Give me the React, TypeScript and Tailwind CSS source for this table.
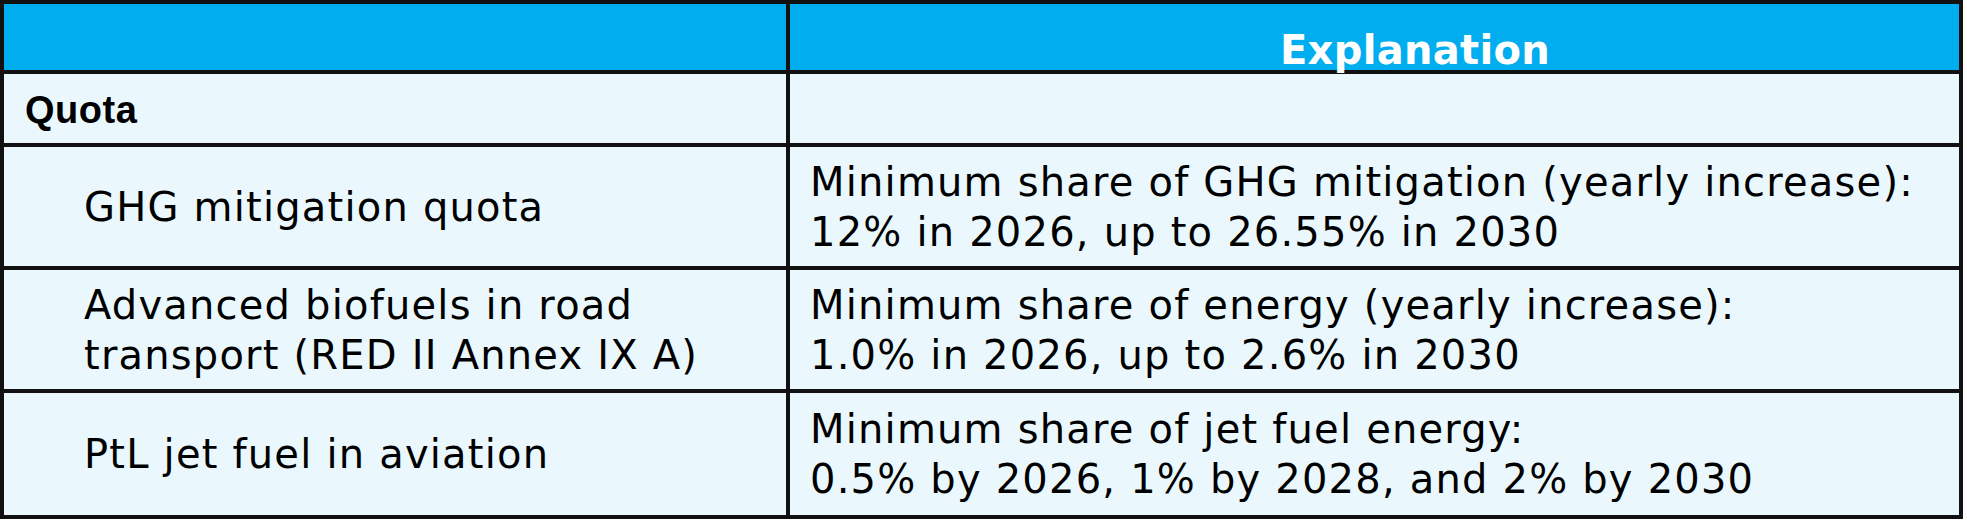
const rows = [
  {
    label: ["GHG mitigation quota"],
    text: ["Minimum share of GHG mitigation (yearly increase):", "12% in 2026, up to 26.55% in 2030"],
    h: "h-[123px]",
  },
  {
    label: ["Advanced biofuels in road", "transport (RED II Annex IX A)"],
    text: ["Minimum share of energy (yearly increase):", "1.0% in 2026, up to 2.6% in 2030"],
    h: "h-[123px]",
  },
  {
    label: ["PtL jet fuel in aviation"],
    text: ["Minimum share of jet fuel energy:", "0.5% by 2026, 1% by 2028, and 2% by 2030"],
    h: "h-[126px]",
  },
];

function Lines({ lines }: { lines: string[] }) {
  return (
    <div className="whitespace-nowrap text-[40px] leading-[50px] tracking-[1.2px] text-black font-['DejaVu_Sans',Verdana,sans-serif]">
      {lines.map((l) => (
        <div key={l}>{l}</div>
      ))}
    </div>
  );
}

export default function App() {
  return (
    <div className="min-h-screen bg-white">
      <div className="w-[1963px] border-4 border-[#111] bg-[#eaf8fe]">
        {/* header */}
        <div className="grid h-[66px] grid-cols-[782px_1fr] bg-[#00aeef]">
          <div />
          <div className="flex items-end border-l-4 border-[#111] pl-[490px]">
            <span className="text-[40px] font-bold leading-none tracking-[0.3px] text-white font-['DejaVu_Sans',Verdana,sans-serif]">
              Explanation
            </span>
          </div>
        </div>

        {/* section row */}
        <div className="grid h-[73px] grid-cols-[782px_1fr] border-t-4 border-[#111]">
          <div className="flex items-center pl-[21px] pt-[2px]">
            <span className="text-[38px] font-bold leading-none tracking-[0.5px] text-black font-['Liberation_Sans',Arial,sans-serif]">
              Quota
            </span>
          </div>
          <div className="border-l-4 border-[#111]" />
        </div>

        {rows.map((r) => (
          <div
            key={r.label[0]}
            className={`grid grid-cols-[782px_1fr] border-t-4 border-[#111] ${r.h}`}
          >
            <div className="flex items-center pl-[80px]">
              <Lines lines={r.label} />
            </div>
            <div className="flex items-center border-l-4 border-[#111] pl-[20px]">
              <Lines lines={r.text} />
            </div>
          </div>
        ))}
      </div>
    </div>
  );
}
